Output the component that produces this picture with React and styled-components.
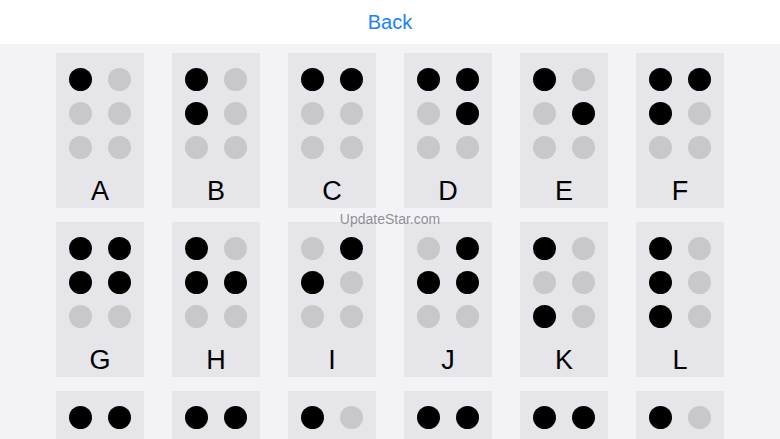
import React from "react";
import styled, { createGlobalStyle } from "styled-components";

const Global = createGlobalStyle`
  html, body { margin: 0; padding: 0; }
  body {
    background: #f2f2f7;
    font-family: "Liberation Sans", Arial, sans-serif;
    overflow: hidden;
  }
`;

const Page = styled.div`
  position: relative;
  width: 780px;
  height: 439px;
  overflow: hidden;
  background: #f2f2f7;
`;

const Header = styled.header`
  height: 44px;
  background: #ffffff;
  display: flex;
  align-items: center;
  justify-content: center;
`;

const BackButton = styled.button`
  border: none;
  background: none;
  padding: 0;
  margin-top: 0px;
  font-family: "Liberation Sans", Arial, sans-serif;
  font-size: 20px;
  color: #1a82fb;
  cursor: pointer;
`;

const Grid = styled.div`
  display: grid;
  grid-template-columns: repeat(6, 88px);
  column-gap: 28px;
  row-gap: 14px;
  justify-content: center;
  padding-top: 9px;
`;

const Card = styled.div`
  height: 155px;
  box-sizing: border-box;
  background: #e5e5ea;
  display: flex;
  flex-direction: column;
  align-items: center;
  padding-top: 14.5px;
`;

const Dots = styled.div`
  display: grid;
  grid-template-columns: 23px 23px;
  grid-auto-rows: 23px;
  grid-auto-flow: column;
  grid-template-rows: repeat(3, 23px);
  column-gap: 15.5px;
  row-gap: 11px;
`;

const Dot = styled.span`
  width: 23px;
  height: 23px;
  border-radius: 50%;
  background: ${(p) => (p.$on ? "#000000" : "#c7c7cc")};
`;

const Letter = styled.div`
  margin-top: 19.5px;
  font-size: 27px;
  line-height: 27px;
  color: #000;
`;

const Watermark = styled.div`
  position: absolute;
  left: 0;
  right: 0;
  top: 211px;
  text-align: center;
  font-family: "Liberation Sans", Arial, sans-serif;
  font-size: 14px;
  color: rgba(110, 110, 115, 0.75);
  pointer-events: none;
`;

const letters = [
  ["A", [1]],
  ["B", [1, 2]],
  ["C", [1, 4]],
  ["D", [1, 4, 5]],
  ["E", [1, 5]],
  ["F", [1, 2, 4]],
  ["G", [1, 2, 4, 5]],
  ["H", [1, 2, 5]],
  ["I", [2, 4]],
  ["J", [2, 4, 5]],
  ["K", [1, 3]],
  ["L", [1, 2, 3]],
  ["M", [1, 3, 4]],
  ["N", [1, 3, 4, 5]],
  ["O", [1, 3, 5]],
  ["P", [1, 2, 3, 4]],
  ["Q", [1, 2, 3, 4, 5]],
  ["R", [1, 2, 3, 5]],
];

export default function App() {
  return (
    <Page>
      <Global />
      <Header>
        <BackButton>Back</BackButton>
      </Header>
      <Grid>
        {letters.map(([l, on]) => (
          <Card key={l}>
            <Dots>
              {[1, 2, 3, 4, 5, 6].map((n) => (
                <Dot key={n} $on={on.includes(n)} />
              ))}
            </Dots>
            <Letter>{l}</Letter>
          </Card>
        ))}
      </Grid>
      <Watermark>UpdateStar.com</Watermark>
    </Page>
  );
}
